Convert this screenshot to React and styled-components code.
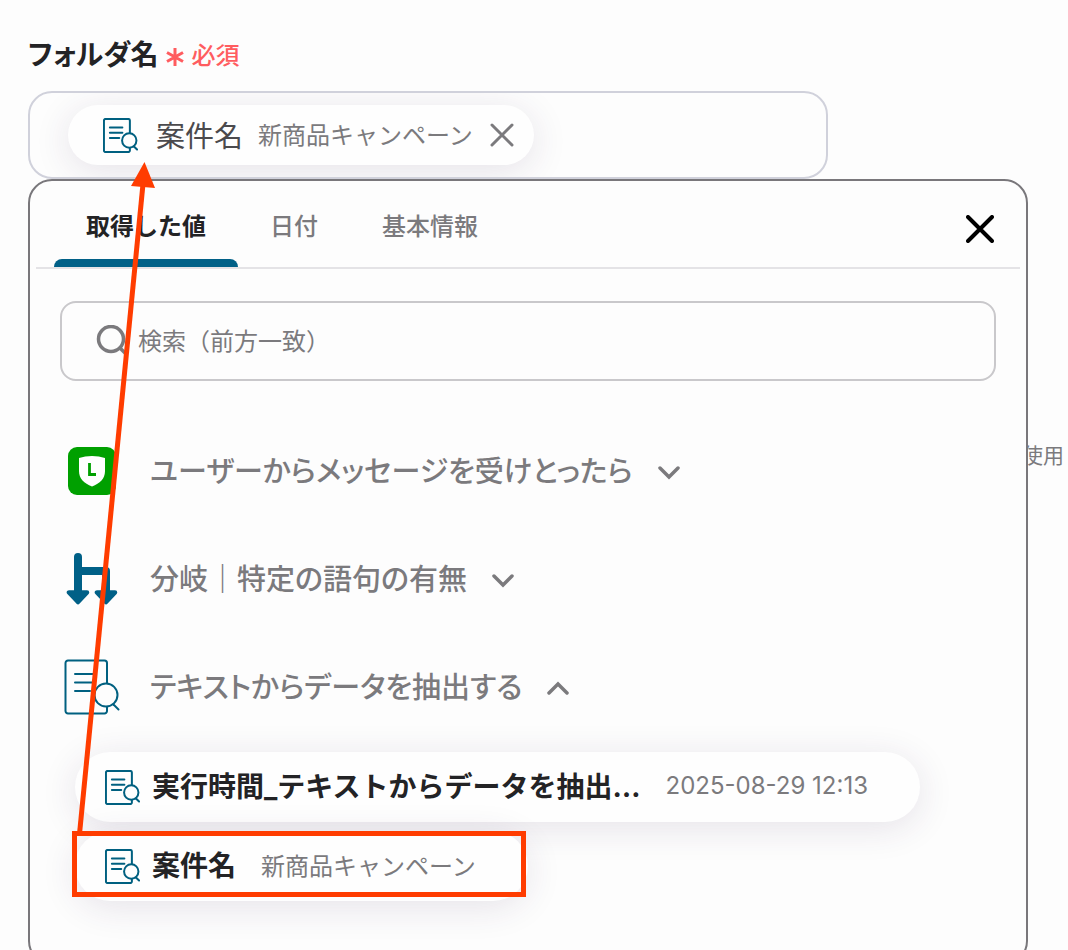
import React, { useState } from "react";
import styled, { createGlobalStyle } from "styled-components";

const GlobalStyle = createGlobalStyle`
  *, *::before, *::after { box-sizing: border-box; }
  body {
    margin: 0;
    background: #fdfdfd;
    color: #232325;
    font-family: Inter, "Noto Sans CJK JP", sans-serif;
    overflow-x: hidden;
  }
  button, input { font: inherit; color: inherit; }
  button { background: none; border: 0; padding: 0; cursor: pointer; }
`;

const Page = styled.main`
  position: relative;
  padding: 32px 40px 0 28px;
  min-height: 100vh;
`;

const FieldHeader = styled.div`
  display: flex;
  align-items: center;
  height: 44px;
  margin-bottom: 15px;
`;

const FieldLabel = styled.span`
  padding-bottom: 2px;
  font-size: 28px;
  font-weight: 700;
  font-feature-settings: "palt";
`;

const Required = styled.span`
  display: flex;
  align-items: center;
  gap: 8px;
  margin-left: 7px;
  padding-bottom: 2px;
  font-size: 24px;
  font-weight: 500;
  color: #ff5c5f;

  svg { margin-top: 8px; }
`;

const Field = styled.div`
  display: flex;
  align-items: center;
  width: 80%;
  height: 88px;
  padding: 0 38px;
  border: 2px solid #d0d1db;
  border-radius: 24px;
  overflow: hidden;
`;

const Pill = styled.div`
  display: flex;
  align-items: center;
  background: #fefefe;
  border-radius: 36px;
  box-shadow: 0 6px 36px rgba(60, 30, 80, 0.12);
`;

const Chip = styled(Pill)`
  height: 60px;
  padding: 0 20px 0 35px;
`;

const ChipName = styled.span`
  margin-left: 18px;
  padding-bottom: 3px;
  font-size: 29px;
  color: #4b4a4d;
`;

const Value = styled.span`
  margin-left: ${(p) => p.$gap}px;
  padding-bottom: 3px;
  font-size: 24px;
  color: #7b7a7d;
`;

const IconButton = styled.button`
  display: grid;
  place-items: center;
  margin-left: ${(p) => p.$gap || 0}px;
  color: ${(p) => p.$color};
`;

const Panel = styled.section`
  position: relative;
  z-index: 1;
  padding-bottom: 62px;
  background: #fdfdfd;
  border: 2px solid #79777b;
  border-radius: 24px;
`;

const PanelHeader = styled.div`
  display: flex;
  align-items: center;
  justify-content: space-between;
  height: 88px;
  margin: 0 6px;
  padding: 0 26px 0 18px;
  border-bottom: 2px solid #e4e3e6;
`;

const CloseButton = styled(IconButton)`
  padding-top: 10px;
`;

const Tabs = styled.div`
  display: flex;
  align-self: stretch;
`;

const Tab = styled.button`
  position: relative;
  padding: 0 32px 0;
  font-size: 24px;
  font-weight: ${(p) => (p.$active ? 700 : 500)};
  color: ${(p) => (p.$active ? "#232325" : "#7b7a7d")};

  &::after {
    content: "";
    position: absolute;
    left: 0;
    right: 0;
    bottom: 0;
    height: 8px;
    border-radius: 8px 8px 0 0;
    background: ${(p) => (p.$active ? "#006087" : "transparent")};
  }
`;

const SearchBox = styled.label`
  display: flex;
  align-items: center;
  gap: 11px;
  height: 80px;
  margin: 32px 30px 36px;
  padding: 0 33px;
  border: 2px solid #c9c8cb;
  border-radius: 16px;
  color: #7b7a7d;
`;

const SearchInput = styled.input`
  flex: 1;
  min-width: 0;
  padding: 0;
  border: 0;
  outline: 0;
  background: none;
  font-size: 24px;

  &::placeholder { color: #7b7a7d; opacity: 1; }
`;

const List = styled.ul`
  margin: 0;
  padding: 0;
  list-style: none;
`;

const GroupButton = styled.button`
  display: flex;
  align-items: center;
  height: 108px;
  padding-left: 34px;
  font-size: 29px;
  font-weight: 500;
  font-feature-settings: "palt";
  color: #7b7a7d;
`;

const GroupIcon = styled.span`
  display: grid;
  place-items: center;
  width: 56px;
  margin-right: 30px;
`;

const GroupTitle = styled.span`
  margin-right: 25px;
  padding-bottom: 4px;
`;

const ValueList = styled(List)`
  display: flex;
  flex-direction: column;
  align-items: flex-start;
  gap: 9px;
  padding: 11px 0 0 45px;
`;

const ValueItem = styled(Pill).attrs({ as: "button" })`
  height: 70px;
  padding: 0 52px 0 30px;
  background: #fefefe;
`;

const ItemName = styled.span`
  margin-left: 12px;
  padding-bottom: 4px;
  font-size: 28px;
  font-weight: 700;
`;

const Aside = styled.span`
  position: absolute;
  top: 440px;
  right: 4px;
  font-size: 21px;
  line-height: 32px;
  color: #7b7a7d;
`;

const Highlight = styled.span`
  position: absolute;
  z-index: 2;
  top: 831px;
  left: 72px;
  width: 454px;
  height: 66px;
  border: 5px solid #ff3c00;
  pointer-events: none;
`;

const Arrow = styled.svg`
  position: absolute;
  z-index: 2;
  top: 160px;
  left: 72px;
  pointer-events: none;
`;

const DocSearchIcon = ({ size = 35, stroke = 2 }) => (
  <svg width={size} height={size} viewBox="0 0 56 56" fill="none" stroke="#006080" strokeLinecap="round" strokeLinejoin="round" strokeWidth={(stroke * 56) / size}>
    <path d="M43 24V4a2.500 2.500 0 0 0-2.500-2.500H4A2.500 2.500 0 0 0 1.500 4v48A2.500 2.500 0 0 0 4 54.500h36.500A2.500 2.500 0 0 0 43 52v-4" />
    <path d="M11 15h20M11 23.500h20M11 32h15" />
    <circle cx="42" cy="36" r="11.500" />
    <path d="M49.500 45.500l5 5" />
  </svg>
);

const ShieldIcon = () => (
  <svg width="48" height="48" viewBox="0 0 48 48">
    <rect width="48" height="48" rx="9" fill="#00a000" />
    <path d="M24 9q7 0 13 2v13c0 8-5 12-13 15.500C16 36 11 32 11 24V11q6-2 13-2z" fill="#fff" />
    <path d="M21.500 16v11.500H28" fill="none" stroke="#00a000" strokeWidth="2.800" />
  </svg>
);

const BranchIcon = () => (
  <svg width="52" height="52" viewBox="0 0 52 52" fill="#006087" stroke="#006087" strokeLinejoin="round">
    <path d="M12 4v36M12 18h28v22" fill="none" strokeWidth="8" strokeLinecap="round" />
    <path d="M3 39.500h18L12 49z M31 39.500h18L40 49z" strokeWidth="4.500" />
  </svg>
);

const CrossIcon = ({ size, stroke }) => (
  <svg width={size} height={size} viewBox={`0 0 ${size} ${size}`} fill="none" stroke="currentColor" strokeWidth={stroke} strokeLinecap="round">
    <path d={`M2 2L${size - 2} ${size - 2}M${size - 2} 2L2 ${size - 2}`} />
  </svg>
);

const SearchIcon = () => (
  <svg width="32" height="32" viewBox="0 0 32 32" fill="none" stroke="currentColor" strokeWidth="3.500">
    <circle cx="16" cy="14" r="12.500" />
    <path d="M25 23l6 6" />
  </svg>
);

const Chevron = ({ up }) => (
  <svg width="22" height="18" viewBox="0 0 22 18" fill="none" stroke="currentColor" strokeWidth="3.500" strokeLinecap="round">
    <path d={up ? "M2 15l9-9 9 9" : "M2 6l9 9 9-9"} />
  </svg>
);

const AsteriskIcon = () => (
  <svg width="18" height="20" viewBox="0 0 18 20" fill="none" stroke="currentColor" strokeWidth="3">
    <path d="M9 1v18M1 5.500l16 9M17 5.500l-16 9" />
  </svg>
);

const tabs = ["取得した値", "日付", "基本情報"];

const groups = [
  { title: "ユーザーからメッセージを受けとったら", icon: <ShieldIcon /> },
  { title: "分岐｜特定の語句の有無", icon: <BranchIcon /> },
  {
    title: "テキストからデータを抽出する",
    icon: <DocSearchIcon size={56} />,
    values: [
      { name: "実行時間_テキストからデータを抽出…", value: "2025-08-29 12:13" },
      { name: "案件名", value: "新商品キャンペーン" },
    ],
  },
];

export default function App() {
  const [active, setActive] = useState(0);
  return (
    <Page lang="ja">
      <GlobalStyle />
      <FieldHeader>
        <FieldLabel id="folder-label">フォルダ名</FieldLabel>
        <Required><AsteriskIcon />必須</Required>
      </FieldHeader>
      <Field role="group" aria-labelledby="folder-label">
        <Chip>
          <DocSearchIcon />
          <ChipName>案件名</ChipName>
          <Value $gap={15}>新商品キャンペーン</Value>
          <IconButton type="button" aria-label="削除" $gap={17} $color="#7b7a7d">
            <CrossIcon size={24} stroke={3} />
          </IconButton>
        </Chip>
      </Field>
      <Aside>使用</Aside>
      <Panel>
        <PanelHeader>
          <Tabs role="tablist">
            {tabs.map((t, i) => (
              <Tab key={t} type="button" role="tab" aria-selected={i === active} $active={i === active} onClick={() => setActive(i)}>
                {t}
              </Tab>
            ))}
          </Tabs>
          <CloseButton type="button" aria-label="閉じる" $color="#000">
            <CrossIcon size={28} stroke={4} />
          </CloseButton>
        </PanelHeader>
        <SearchBox>
          <SearchIcon />
          <SearchInput type="text" aria-label="検索" placeholder="検索（前方一致）" />
        </SearchBox>
        <List>
          {groups.map((g) => (
            <li key={g.title}>
              <GroupButton type="button" aria-expanded={!!g.values}>
                <GroupIcon>{g.icon}</GroupIcon>
                <GroupTitle>{g.title}</GroupTitle>
                <Chevron up={!!g.values} />
              </GroupButton>
              {g.values && (
                <ValueList>
                  {g.values.map((v) => (
                    <li key={v.name}>
                      <ValueItem type="button">
                        <DocSearchIcon />
                        <ItemName>{v.name}</ItemName>
                        <Value $gap={25}>{v.value}</Value>
                      </ValueItem>
                    </li>
                  ))}
                </ValueList>
              )}
            </li>
          ))}
        </List>
      </Panel>
      <Highlight />
      <Arrow width="90" height="680" viewBox="0 0 90 680">
        <path d="M7.500 674L71 24" stroke="#ff3c00" strokeWidth="5" />
        <path d="M72.500 2L83 28L59 26z" fill="#ff3c00" />
      </Arrow>
    </Page>
  );
}
